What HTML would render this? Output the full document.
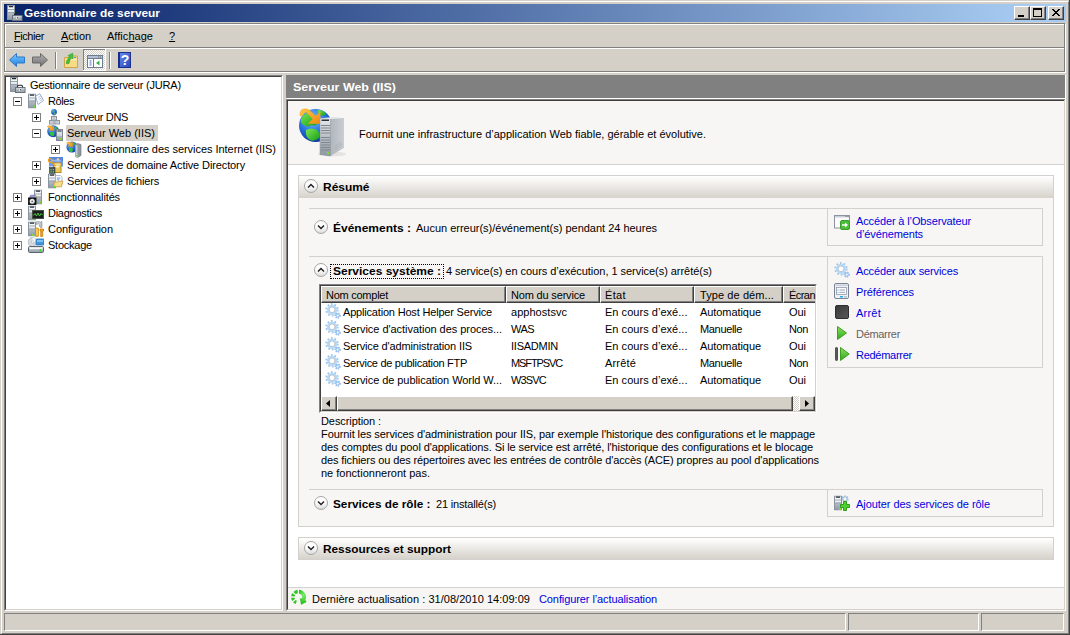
<!DOCTYPE html>
<html lang="fr"><head><meta charset="utf-8"><title>Gestionnaire de serveur</title>
<style>
html,body{margin:0;padding:0;}
body{width:1070px;height:635px;overflow:hidden;background:#D4D0C8;position:relative;font-family:"Liberation Sans",sans-serif;font-size:11px;color:#000;}
div,span,svg{position:absolute;box-sizing:border-box;}
.t{white-space:nowrap;line-height:16px;height:16px;font-size:11px;}
.b{font-weight:bold;transform-origin:0 50%;}
.w{color:#fff;}
.lk{color:#0000E0;}
.gr{color:#666260;}
.hl{position:absolute;height:1px;}
.vl{position:absolute;width:1px;}
u{text-decoration:underline;}
.cb{width:16px;height:14px;background:#D4D0C8;border-left:1px solid #fff;border-top:1px solid #fff;border-right:1px solid #404040;border-bottom:1px solid #404040;box-shadow:inset -1px -1px 0 #808080;}
.eb{width:9px;height:9px;border:1px solid #808080;background:#fff;}
.eb i{position:absolute;background:#000;}
.eb i.h{left:1px;top:3px;width:5px;height:1px;}
.eb i.v{left:3px;top:1px;width:1px;height:5px;}
.chev{width:14px;height:14px;border-radius:7px;border:1px solid #A6A6A6;background:linear-gradient(180deg,#fff 45%,#DCDCDC 100%);}
.chev svg{left:-1px;top:-1px;}
.hd{height:17px;background:#D4D0C8;border-top:1px solid #fff;border-left:1px solid #fff;border-right:1px solid #404040;border-bottom:1px solid #404040;box-shadow:inset -1px -1px 0 #808080;}
.sb{height:15px;background:#D4D0C8;border-top:1px solid #fff;border-left:1px solid #fff;border-right:1px solid #404040;border-bottom:1px solid #404040;box-shadow:inset -1px -1px 0 #808080;}
.sp{top:613px;height:18px;border-top:1px solid #808080;border-left:1px solid #808080;border-bottom:1px solid #fff;border-right:1px solid #fff;}

</style></head>
<body>
<!-- window frame -->
<div style="left:0;top:0;width:1070px;height:635px;border-right:1px solid #404040;border-bottom:1px solid #404040;"></div>
<div style="left:1px;top:1px;width:1068px;height:633px;border-left:1px solid #fff;border-top:1px solid #fff;border-right:1px solid #808080;border-bottom:1px solid #808080;"></div>

<!-- title bar -->
<div id="title" style="left:4px;top:4px;width:1062px;height:18px;background:linear-gradient(90deg,#0A246A 0%,#0A246A 2%,#A6CAF0 96%,#A6CAF0 100%);"></div>
<svg style="left:7px;top:5px" width="16" height="16" viewBox="0 0 16 16"> <use href="#tw" x="0" y="0"/>
 <path d="M7.500 10.500 v-1 q0 -1.200 1.200 -1.200 h2.600 q1.200 0 1.200 1.200 v1" fill="none" stroke="#23282E" stroke-width="1.100"/>
 <rect x="5.500" y="10.500" width="9.500" height="5" fill="#A3ABB4" stroke="#6A727B" stroke-width="1"/>
 <rect x="6" y="11" width="8.500" height="1.500" fill="#C9CFD6"/>
 <rect x="9.300" y="11.500" width="1.800" height="2.500" fill="#F4F4F4"/><rect x="10" y="12" width="0.800" height="1.500" fill="#333"/>
</svg>
<span class="t b w" style="left:24px;top:5px;transform:scaleX(1.0798);">Gestionnaire de serveur</span>
<!-- caption buttons -->
<div class="cb" style="left:1014px;top:6px;"></div>
<div class="cb" style="left:1030px;top:6px;"></div>
<div class="cb" style="left:1048px;top:6px;"></div>
<svg style="left:1014px;top:6px" width="50" height="14" viewBox="0 0 50 14" shape-rendering="crispEdges">
 <rect x="4" y="9" width="6" height="2" fill="#000"/>
 <rect x="19.500" y="3" width="8" height="7" fill="none" stroke="#000" stroke-width="1"/><rect x="19" y="2" width="9" height="2" fill="#000"/>
 <path d="M38 3 l7 7 M39 3 l7 7 M45 3 l-7 7 M46 3 l-7 7" stroke="#000" stroke-width="1" shape-rendering="auto"/>
</svg>

<!-- menu bar + toolbar etched frame -->
<div style="left:4px;top:23px;width:1061px;height:49px;border:1px solid #808080;"></div>
<div style="left:5px;top:24px;width:1061px;height:49px;border:1px solid #fff;border-left-color:#fff;"></div>
<div class="hl" style="left:5px;top:47px;width:1059px;background:#808080;"></div>
<div class="hl" style="left:5px;top:48px;width:1059px;background:#fff;"></div>
<div class="hl" style="left:4px;top:71px;width:1061px;background:#808080;"></div>
<div class="vl" style="left:1064px;top:23px;height:49px;background:#808080;"></div>
<div class="vl" style="left:4px;top:72px;height:1px;background:#fff;"></div>
<span class="t " style="left:14px;top:28px;letter-spacing:-0.433px;"><u>F</u>ichier</span>
<span class="t " style="left:61px;top:28px;letter-spacing:-0.099px;"><u>A</u>ction</span>
<span class="t " style="left:107px;top:28px;letter-spacing:0.035px;">Affic<u>h</u>age</span>
<span class="t " style="left:169px;top:28px;"><u>?</u></span>

<!-- toolbar icons -->
<svg style="left:8px;top:51px;overflow:visible" width="130" height="20" viewBox="0 0 130 20">
 <defs>
  <linearGradient id="gb" x1="0" y1="0" x2="0" y2="1"><stop offset="0" stop-color="#7DCBFF"/><stop offset="1" stop-color="#1E7FE0"/></linearGradient>
  <linearGradient id="gg" x1="0" y1="0" x2="0" y2="1"><stop offset="0" stop-color="#B5B5B5"/><stop offset="1" stop-color="#6E6E6E"/></linearGradient>
  <linearGradient id="gh" x1="0" y1="0" x2="1" y2="1"><stop offset="0" stop-color="#6C8FEA"/><stop offset="1" stop-color="#2645B8"/></linearGradient>
 </defs>
 <path d="M1.500 9 L8.500 2.500 V6 H16.500 V12 H8.500 V15.500 Z" fill="url(#gb)" stroke="#2B78C8" stroke-width="1"/>
 <path d="M39.500 9 L32.500 2.500 V6 H24.500 V12 H32.500 V15.500 Z" fill="url(#gg)" stroke="#6A6A6A" stroke-width="1"/>
 <rect x="47" y="1" width="1" height="17" fill="#808080"/><rect x="48" y="1" width="1" height="17" fill="#fff"/>
 <!-- folder up -->
 <path d="M56.500 6.500 h4.500 l1.500 -1.500 h7 v11.500 h-13 z" fill="#F6DC86" stroke="#CFA645" stroke-width="1"/>
 <rect x="57" y="8" width="12" height="1" fill="#FBEDB8"/>
 <rect x="66" y="6" width="2" height="1" fill="#5A8FD8"/>
 <path d="M58.300 12.500 q0.200 -4.500 3.200 -6.300 l-1.400 -1.600 l4.600 -2.400 l0.300 5.600 l-1.500 -0.800 q-2 1.300 -2.400 5.200 q-1.400 0.900 -2.800 0.300 z" fill="#43C23C" stroke="#2C9A2A" stroke-width="0.600"/>
 <!-- pressed button -->
 <defs><pattern id="dth" width="2" height="2" patternUnits="userSpaceOnUse"><rect width="2" height="2" fill="#D4D0C8"/><rect width="1" height="1" fill="#fff"/><rect x="1" y="1" width="1" height="1" fill="#fff"/></pattern></defs>
 <rect x="75" y="-2" width="23" height="22" fill="url(#dth)"/>
 <rect x="75" y="-2" width="23" height="1" fill="#808080"/><rect x="75" y="-2" width="1" height="22" fill="#808080"/>
 <rect x="75" y="19" width="23" height="1" fill="#fff"/><rect x="97" y="-2" width="1" height="22" fill="#fff"/>
 <rect x="79.500" y="4.500" width="15" height="12" fill="#fff" stroke="#6B7C93" stroke-width="1"/>
 <rect x="80" y="5" width="14" height="2" fill="#B4C0D0"/>
 <rect x="90" y="5.500" width="1" height="1" fill="#56657A"/><rect x="92" y="5.500" width="1" height="1" fill="#56657A"/>
 <rect x="80" y="7" width="14" height="1" fill="#6B7C93"/>
 <rect x="85" y="8" width="1" height="8" fill="#6B7C93"/>
 <rect x="81.500" y="9.500" width="2" height="1" fill="#3F6FD0"/><rect x="81.500" y="11.500" width="2" height="1" fill="#3F6FD0"/><rect x="81.500" y="13.500" width="2" height="1" fill="#3F6FD0"/>
 <path d="M91.500 9.500 v5 l-3.500 -2.500 z" fill="#37B24A"/>
 <rect x="101" y="1" width="1" height="17" fill="#808080"/><rect x="102" y="1" width="1" height="17" fill="#fff"/>
 <!-- help -->
 <rect x="110.500" y="1.500" width="12" height="15" fill="url(#gh)" stroke="#1B2F8C" stroke-width="1"/>
 <rect x="110" y="1" width="2" height="16" fill="#1A2C88"/>
 <text x="117" y="14" font-family="Liberation Sans, sans-serif" font-size="14" font-weight="bold" fill="#fff" text-anchor="middle">?</text>
</svg>

<!-- left tree panel -->
<div style="left:4px;top:75px;width:279px;height:536px;background:#fff;border-left:1px solid #808080;border-top:1px solid #808080;border-right:1px solid #fff;border-bottom:1px solid #fff;"></div>
<div style="left:5px;top:76px;width:277px;height:534px;border-left:1px solid #404040;border-top:1px solid #404040;border-right:1px solid #D4D0C8;border-bottom:1px solid #D4D0C8;"></div>

<!-- tree -->
<div style="left:66px;top:125px;width:92px;height:16px;background:#D4D0C8;"></div>
<span class="t " style="left:30px;top:77px;letter-spacing:-0.184px;">Gestionnaire de serveur (JURA)</span>
<span class="t " style="left:48px;top:93px;letter-spacing:-0.425px;">Rôles</span>
<span class="t " style="left:67px;top:109px;letter-spacing:-0.345px;">Serveur DNS</span>
<span class="t " style="left:67px;top:125px;letter-spacing:0.010px;">Serveur Web (IIS)</span>
<span class="t " style="left:87px;top:141px;letter-spacing:-0.044px;">Gestionnaire des services Internet (IIS)</span>
<span class="t " style="left:67px;top:157px;letter-spacing:-0.116px;">Services de domaine Active Directory</span>
<span class="t " style="left:67px;top:173px;letter-spacing:-0.169px;">Services de fichiers</span>
<span class="t " style="left:48px;top:189px;letter-spacing:-0.133px;">Fonctionnalités</span>
<span class="t " style="left:48px;top:205px;letter-spacing:-0.260px;">Diagnostics</span>
<span class="t " style="left:48px;top:221px;letter-spacing:-0.034px;">Configuration</span>
<span class="t " style="left:48px;top:237px;letter-spacing:-0.234px;">Stockage</span>
<!-- shared defs -->
<svg width="0" height="0" style="left:0;top:0">
 <defs>
  <linearGradient id="tg" x1="0" y1="0" x2="0" y2="1"><stop offset="0" stop-color="#DDE2E8"/><stop offset="1" stop-color="#8E99A5"/></linearGradient>
  <radialGradient id="gl" cx="0.35" cy="0.3" r="0.8"><stop offset="0" stop-color="#6FB4F5"/><stop offset="0.6" stop-color="#1F62D0"/><stop offset="1" stop-color="#103A9A"/></radialGradient>
  <linearGradient id="og" x1="0" y1="0" x2="1" y2="1"><stop offset="0" stop-color="#FFC94A"/><stop offset="1" stop-color="#F08A10"/></linearGradient>
  <linearGradient id="gn" x1="0" y1="0" x2="0" y2="1"><stop offset="0" stop-color="#8BE25E"/><stop offset="1" stop-color="#2FA81C"/></linearGradient>
  <symbol id="tw" viewBox="0 0 8 15" width="8" height="15">
   <rect x="0.500" y="0.500" width="7" height="14" fill="url(#tg)" stroke="#8A949F" stroke-width="1"/>
   <rect x="1" y="2.400" width="6" height="1.700" fill="#F3F5F7"/>
   <rect x="1" y="4.200" width="6" height="0.800" fill="#8F99A4"/>
   <rect x="1" y="5" width="6" height="2.100" fill="#E9ECEF"/>
   <rect x="1" y="7.100" width="6" height="0.800" fill="#8F99A4"/>
   <rect x="2" y="1" width="4" height="1.200" fill="#1E2832"/>
  </symbol>
  <symbol id="gear" viewBox="0 0 16 16" width="16" height="16">
   <circle cx="7" cy="6.800" r="5.400" fill="none" stroke="#A4C8EA" stroke-width="2.600" stroke-dasharray="1.700 1.693"/>
   <circle cx="7" cy="6.800" r="4.100" fill="#fff" stroke="#B7DAF8" stroke-width="2.100"/>
   <circle cx="7" cy="6.800" r="2.900" fill="#fff" stroke="#A3ADB8" stroke-width="0.700"/>
   <circle cx="12.700" cy="12.600" r="2.400" fill="none" stroke="#8DB6E6" stroke-width="1.500" stroke-dasharray="1.050 1.105"/>
   <circle cx="12.700" cy="12.600" r="1.700" fill="#EEF5FC" stroke="#9AC2EE" stroke-width="1.100"/>
  </symbol>
 </defs>
</svg>
<!-- root -->
<svg style="left:10px;top:77px" width="16" height="16" viewBox="0 0 16 16">
 <use href="#tw" x="0" y="0"/>
 <path d="M7.500 10.500 v-1 q0 -1.200 1.200 -1.200 h2.600 q1.200 0 1.200 1.200 v1" fill="none" stroke="#23282E" stroke-width="1.100"/>
 <rect x="5.500" y="10.500" width="9.500" height="5" fill="#A3ABB4" stroke="#6A727B" stroke-width="1"/>
 <rect x="6" y="11" width="8.500" height="1.500" fill="#C9CFD6"/>
 <rect x="9.300" y="11.500" width="1.800" height="2.500" fill="#F4F4F4"/><rect x="10" y="12" width="0.800" height="1.500" fill="#333"/>
</svg>
<!-- roles -->
<svg style="left:28px;top:93px" width="16" height="16" viewBox="0 0 16 16">
 <path d="M7.500 3 L12 0.800 L15.500 7.500 L10 11.500 Z" fill="#FDFEFF" stroke="#8FA6C4" stroke-width="0.900"/>
 <path d="M10 4.500 l3 -1.500 M10.800 6.300 l3 -1.600 M11.500 8 l2.600 -1.500" stroke="#9FB4D6" stroke-width="0.700"/>
 <use href="#tw" x="0" y="0.500"/>
 <rect x="5" y="12.500" width="2" height="2" fill="#55E020"/>
</svg>
<!-- DNS -->
<svg style="left:48px;top:109px" width="16" height="16" viewBox="0 0 16 16">
 <circle cx="6" cy="2.900" r="2.900" fill="url(#gl)"/>
 <path d="M4.300 1.500 q1 -1 2 -0.200 q-0.300 1.200 -1.500 1.600 z M6 3.500 q1.500 -0.300 1.800 0.800 q-0.800 1.200 -1.800 0.700 z" fill="#3FC23A"/>
 <path d="M6 6 v1.500" stroke="#8A9099" stroke-width="1"/>
 <rect x="3.500" y="7.500" width="5" height="3.500" fill="#E1E5EA" stroke="#8E949D" stroke-width="1"/>
 <rect x="1.500" y="11.500" width="4.500" height="3.500" fill="#E1E5EA" stroke="#8E949D" stroke-width="1"/>
 <rect x="7" y="11.500" width="4.500" height="3.500" fill="#E1E5EA" stroke="#8E949D" stroke-width="1"/>
 <rect x="4.500" y="8.500" width="3" height="1" fill="#A9B0BA"/><rect x="2.500" y="12.500" width="2.500" height="1" fill="#A9B0BA"/><rect x="8" y="12.500" width="2.500" height="1" fill="#A9B0BA"/>
</svg>
<!-- IIS server -->
<svg style="left:46px;top:124px" width="18" height="18" viewBox="0 0 18 18">
 <circle cx="7.200" cy="7.200" r="6" fill="url(#gl)"/>
 <path d="M4 8.500 q2 -1.500 4 0 q1 1.500 -0.500 3.500 q-2.500 0.500 -3.500 -1.500 z M8.500 3 q2 -0.500 3 1 q-1 1.500 -2.500 1 z" fill="#35C236"/>
 <path d="M1.200 2.500 q2.500 -2 5.200 0.300 l1.300 -1.300 l0.300 5.200 l-5.200 -0.400 l1.400 -1.400 q-1.500 -1.300 -3 -2.400 z" fill="url(#og)" stroke="#E28A12" stroke-width="0.400"/>
 <rect x="10.500" y="5.500" width="6" height="11" fill="url(#tg)" stroke="#7C8691" stroke-width="1"/>
 <rect x="11.500" y="6.500" width="4" height="1" fill="#27313C"/><rect x="11" y="8.500" width="5" height="1" fill="#F4F6F8"/><rect x="11" y="10.500" width="5" height="1" fill="#EEF1F4"/>
 <rect x="14" y="14" width="2" height="2" fill="#7BE020"/>
</svg>
<!-- IIS manager -->
<svg style="left:66px;top:140px" width="16" height="18" viewBox="0 0 16 18">
 <circle cx="6" cy="7" r="5.600" fill="url(#gl)"/>
 <path d="M3 8.500 q2 -1.500 3.500 0 q1 1.500 -0.500 3.500 q-2 0.500 -3 -1.500 z M7 3 q2 -0.500 2.500 1 q-1 1.500 -2 1 z" fill="#35C236"/>
 <path d="M0.500 2.800 q2.300 -1.800 4.800 0.200 l1.200 -1.200 l0.300 4.800 l-4.800 -0.400 l1.300 -1.300 q-1.400 -1.200 -2.800 -2.100 z" fill="url(#og)" stroke="#E28A12" stroke-width="0.400"/>
 <path d="M9.500 4.500 l2 -1 l3.500 1 v11 l-3.500 2 l-2 -1 z" fill="#8E979F" stroke="#666E76" stroke-width="0.600"/>
 <path d="M9.500 4.500 l2 0.800 v12.200 l-2 -1 z" fill="#C5CBD2"/>
 <rect x="10" y="15" width="1" height="1" fill="#5BE020"/>
</svg>
<!-- AD DS -->
<svg style="left:48px;top:157px" width="16" height="17" viewBox="0 0 16 17">
 <rect x="1" y="0" width="14" height="9.500" fill="#6C9BEA"/>
 <rect x="1" y="0" width="14" height="4" fill="#5587E0"/>
 <path d="M3 3.500 h10 M5 2 v3 M8 2 v3 M11 2 v3" stroke="#A9C6F5" stroke-width="0.700"/>
 <circle cx="10" cy="2.300" r="1.200" fill="#E9C9A0"/><path d="M8.300 6 q1.700 -3 3.400 0 z" fill="#D9B48A"/>
 <rect x="5.500" y="6" width="7.500" height="9.500" fill="#E9C75A" stroke="#B38A1C" stroke-width="1"/>
 <rect x="6" y="6.500" width="6.500" height="2" fill="#F6E29A"/>
 <rect x="7" y="9" width="4" height="1.500" fill="#FFF6D0"/>
 <path d="M3 4.800 L7.500 9" stroke="#E79A1A" stroke-width="1.300"/>
 <circle cx="2.200" cy="3.500" r="1.800" fill="none" stroke="#F2A422" stroke-width="1.300"/>
 <rect x="1.500" y="10.500" width="5.500" height="6" fill="#4A5058" stroke="#2F343A" stroke-width="0.600"/>
 <rect x="2.500" y="12" width="1.300" height="1.300" fill="#52E032"/><rect x="4.800" y="12" width="1.300" height="1.300" fill="#52E032"/>
 <rect x="2.500" y="14.300" width="1.300" height="1.300" fill="#52E032"/><rect x="4.800" y="14.300" width="1.300" height="1.300" fill="#52E032"/>
</svg>
<!-- File services -->
<svg style="left:48px;top:173px" width="16" height="16" viewBox="0 0 16 16">
 <use href="#tw" x="0" y="0.500"/>
 <path d="M7.500 2.500 h5 l1.500 1.500 v6.500 h-6.500 z" fill="#FDFEFF" stroke="#A3ADBA" stroke-width="0.800"/>
 <path d="M8.800 5 h3.500 M8.800 6.800 h2.500" stroke="#4C86D8" stroke-width="0.900"/>
 <path d="M5.500 13.800 l1 -4.800 h3 l0.800 -0.800 h4.500 l-1.300 5.600 z" fill="#F3DB90" stroke="#C39A38" stroke-width="0.800"/>
 <rect x="5" y="13" width="2" height="2" fill="#55E020"/>
</svg>
<!-- Features -->
<svg style="left:28px;top:189px" width="16" height="16" viewBox="0 0 16 16">
 <use href="#tw" x="6" y="0.500"/>
 <rect x="11" y="12.500" width="2" height="2" fill="#7BE020"/>
 <path d="M1.500 9 l1 -2.800 h5 l0.800 2.800 z" fill="#9A9AD0" stroke="#6C6CA8" stroke-width="0.600"/>
 <rect x="7" y="7" width="1.500" height="2" fill="#F2A81D"/>
 <rect x="0.500" y="9" width="7.500" height="6.500" fill="#1D1F22" stroke="#000" stroke-width="0.800"/>
 <circle cx="4.200" cy="12.300" r="2.500" fill="#E8EAEC"/><circle cx="4.200" cy="12.300" r="0.900" fill="#6A6F75"/>
</svg>
<!-- Diagnostics -->
<svg style="left:28px;top:205px" width="16" height="16" viewBox="0 0 16 16">
 <use href="#tw" x="0" y="0.500"/>
 <rect x="4" y="13" width="2" height="1.500" fill="#55E020"/>
 <rect x="4.500" y="5.500" width="11" height="8" fill="#1A1E1A" stroke="#4A4F4A" stroke-width="1"/>
 <path d="M5.500 10.500 l1.500 -2 l1.500 2.500 l1.500 -3 l1.500 3 l1.500 -2.500 l1.500 1.500" fill="none" stroke="#46C83C" stroke-width="1"/>
</svg>
<!-- Configuration -->
<svg style="left:28px;top:221px" width="16" height="16" viewBox="0 0 16 16">
 <use href="#tw" x="0" y="0.500"/>
 <rect x="4" y="13" width="2" height="2" fill="#7BE020"/>
 <path d="M8 1 q3 -1.500 5.500 1 q1 2.500 -1 4.500 l-1.500 -1.500 q1 -1.500 0 -2.500 l-2.500 1 z" fill="#D5D9DE" stroke="#8A9099" stroke-width="0.700"/>
 <path d="M13 0.500 l1 0 v6 l-1 0 z" fill="#B8BDC4" stroke="#8A9099" stroke-width="0.500"/>
 <rect x="7.500" y="7" width="3" height="8.500" rx="0.800" fill="#F6B21D" stroke="#D08A0A" stroke-width="0.700"/>
 <rect x="8.500" y="8" width="1" height="6" fill="#FFE08A"/>
 <path d="M12 8 h3.500 v2 h-0.800 v5.500 h-2 v-5.500 h-0.700 z" fill="#F39A14" stroke="#C97A08" stroke-width="0.700"/>
</svg>
<!-- Storage -->
<svg style="left:28px;top:237px" width="16" height="16" viewBox="0 0 16 16">
 <circle cx="4.500" cy="5" r="4.400" fill="#D9DCE0" stroke="#9EA4AB" stroke-width="0.700"/>
 <circle cx="4.500" cy="5" r="1.400" fill="#F8F8F8" stroke="#9EA4AB" stroke-width="0.600"/>
 <path d="M4.500 0.600 A4.400 4.400 0 0 1 8.900 5 L5.900 5 A1.400 1.400 0 0 0 4.500 3.600 Z" fill="#F4F6F8"/>
 <rect x="8" y="2" width="8" height="6" rx="0.800" fill="#3F97E0" stroke="#2A6FB8" stroke-width="0.800"/>
 <rect x="9" y="3" width="6" height="2" fill="#7FC0F2"/>
 <rect x="0.500" y="9.500" width="15" height="6" rx="1.200" fill="url(#tg)" stroke="#5F666E" stroke-width="1"/>
 <rect x="1.500" y="10.500" width="13" height="1.500" fill="#F6F8FA"/>
 <rect x="11.500" y="12" width="1.500" height="2.500" fill="#3EDC28"/>
</svg>

<!-- expand boxes -->
<div class="eb" style="left:13px;top:97px;"><i class="h"></i></div>
<div class="eb" style="left:32px;top:113px;"><i class="h"></i><i class="v"></i></div>
<div class="eb" style="left:32px;top:129px;"><i class="h"></i></div>
<div class="eb" style="left:51px;top:145px;"><i class="h"></i><i class="v"></i></div>
<div class="eb" style="left:32px;top:161px;"><i class="h"></i><i class="v"></i></div>
<div class="eb" style="left:32px;top:177px;"><i class="h"></i><i class="v"></i></div>
<div class="eb" style="left:13px;top:193px;"><i class="h"></i><i class="v"></i></div>
<div class="eb" style="left:13px;top:209px;"><i class="h"></i><i class="v"></i></div>
<div class="eb" style="left:13px;top:225px;"><i class="h"></i><i class="v"></i></div>
<div class="eb" style="left:13px;top:241px;"><i class="h"></i><i class="v"></i></div>

<!-- right panel -->
<div style="left:286px;top:75px;width:780px;height:536px;border-left:1px solid #808080;border-right:1px solid #fff;border-bottom:1px solid #fff;"></div>
<div style="left:287px;top:75px;width:778px;height:535px;border-left:1px solid #404040;border-right:1px solid #D4D0C8;border-bottom:1px solid #D4D0C8;"></div>
<div style="left:286px;top:75px;width:779px;height:23px;background:#808080;"></div>
<div class="hl" style="left:286px;top:98px;width:779px;background:#fff;"></div>
<div class="hl" style="left:286px;top:99px;width:779px;background:#808080;"></div>
<div class="hl" style="left:287px;top:100px;width:777px;background:#404040;"></div>
<span class="t b w" style="left:293px;top:79px;transform:scaleX(1.1332);">Serveur Web (IIS)</span>
<div id="content" style="left:288px;top:101px;width:776px;height:508px;background:#fff;"></div>
<div style="left:288px;top:101px;width:776px;height:63px;background:#F7F6F4;"></div>
<div class="hl" style="left:288px;top:164px;width:776px;background:#D0D0D0;"></div>
<span class="t " style="left:359px;top:126px;letter-spacing:0.007px;">Fournit une infrastructure d’application Web fiable, gérable et évolutive.</span>

<!-- Resume section -->
<div style="left:298px;top:175px;width:756px;height:352px;background:#F7F6F4;border:1px solid #D2D1CE;"></div>
<div style="left:299px;top:176px;width:754px;height:22px;background:linear-gradient(180deg,#FFFFFF 0%,#F4F3F0 28%,#E4E2DD 64%,#D6D2CB 100%);"></div>
<div class="chev" style="left:304px;top:179px;"><svg width="14" height="14" viewBox="0 0 14 14"><path d="M4 8.500 L7 5.500 L10 8.500" fill="none" stroke="#222" stroke-width="1.500"/></svg></div>
<span class="t b" style="left:323.3px;top:179px;transform:scaleX(1.0865);">Résumé</span>

<div class="hl" style="left:309px;top:208px;width:734px;background:#D2D1CE;"></div>
<div class="chev" style="left:314px;top:220px;"><svg width="14" height="14" viewBox="0 0 14 14"><path d="M4 5.500 L7 8.500 L10 5.500" fill="none" stroke="#222" stroke-width="1.500"/></svg></div>
<span class="t b" style="left:332.5px;top:220px;transform:scaleX(1.0904);">Événements :</span>
<span class="t " style="left:416px;top:220px;letter-spacing:-0.012px;">Aucun erreur(s)/événement(s) pendant 24 heures</span>
<div style="left:827px;top:208px;width:216px;height:38px;border:1px solid #D2D0CC;border-top:none;"></div>
<span class="t lk" style="left:856px;top:213px;letter-spacing:-0.130px;">Accéder à l’Observateur</span>
<span class="t lk" style="left:856px;top:226px;letter-spacing:-0.125px;">d’événements</span>

<div class="hl" style="left:309px;top:256px;width:734px;background:#D2D1CE;"></div>
<div class="chev" style="left:314px;top:263px;"><svg width="14" height="14" viewBox="0 0 14 14"><path d="M4 8.500 L7 5.500 L10 8.500" fill="none" stroke="#222" stroke-width="1.500"/></svg></div>
<div style="left:330px;top:264px;width:114px;height:15px;border:1px dotted #000;"></div>
<span class="t b" style="left:332.5px;top:263px;transform:scaleX(1.0900);">Services système :</span>
<span class="t " style="left:446px;top:263px;letter-spacing:-0.042px;">4 service(s) en cours d’exécution, 1 service(s) arrêté(s)</span>
<div style="left:827px;top:256px;width:216px;height:112px;border:1px solid #D2D1CE;border-top:none;"></div>
<span class="t lk" style="left:856px;top:263px;letter-spacing:-0.127px;">Accéder aux services</span>
<span class="t lk" style="left:856px;top:284px;letter-spacing:-0.119px;">Préférences</span>
<span class="t lk" style="left:856px;top:305px;letter-spacing:0.231px;">Arrêt</span>
<span class="t gr" style="left:856px;top:326px;letter-spacing:-0.307px;">Démarrer</span>
<span class="t lk" style="left:856px;top:347px;letter-spacing:-0.269px;">Redémarrer</span>

<!-- list view -->
<div style="left:319px;top:284px;width:498px;height:129px;background:#fff;border-left:1px solid #808080;border-top:1px solid #808080;border-right:1px solid #fff;border-bottom:1px solid #fff;"></div>
<div style="left:320px;top:285px;width:496px;height:127px;border-left:1px solid #404040;border-top:1px solid #404040;border-right:1px solid #D4D0C8;border-bottom:1px solid #D4D0C8;"></div>
<div class="hd" style="left:321px;top:286px;width:185px;"></div>
<div class="hd" style="left:506px;top:286px;width:94px;"></div>
<div class="hd" style="left:600px;top:286px;width:94px;"></div>
<div class="hd" style="left:694px;top:286px;width:89px;"></div>
<div class="hd" style="left:783px;top:286px;width:32px;border-right:none;box-shadow:inset 0 -1px 0 #808080;"></div>
<span class="t " style="left:326px;top:287px;letter-spacing:-0.254px;">Nom complet</span>
<span class="t " style="left:511px;top:287px;letter-spacing:-0.173px;">Nom du service</span>
<span class="t " style="left:605px;top:287px;letter-spacing:0.355px;">État</span>
<span class="t " style="left:700px;top:287px;letter-spacing:0.088px;">Type de dém...</span>
<span class="t " style="left:789px;top:287px;letter-spacing:-0.550px;">Écran</span>

<span class="t " style="left:343px;top:304px;letter-spacing:-0.183px;">Application Host Helper Service</span>
<span class="t " style="left:343px;top:321px;letter-spacing:-0.043px;">Service d'activation des proces...</span>
<span class="t " style="left:343px;top:338px;letter-spacing:-0.141px;">Service d'administration IIS</span>
<span class="t " style="left:343px;top:355px;letter-spacing:-0.287px;">Service de publication FTP</span>
<span class="t " style="left:343px;top:372px;letter-spacing:-0.067px;">Service de publication World W...</span>
<span class="t " style="left:511px;top:304px;letter-spacing:0.034px;">apphostsvc</span>
<span class="t " style="left:511px;top:321px;letter-spacing:-0.552px;">WAS</span>
<span class="t " style="left:511px;top:338px;letter-spacing:-0.238px;">IISADMIN</span>
<span class="t " style="left:511px;top:355px;letter-spacing:-1.113px;">MSFTPSVC</span>
<span class="t " style="left:511px;top:372px;letter-spacing:-0.825px;">W3SVC</span>
<span class="t " style="left:605px;top:304px;letter-spacing:0.033px;">En cours d’exé...</span>
<span class="t " style="left:605px;top:321px;letter-spacing:0.033px;">En cours d’exé...</span>
<span class="t " style="left:605px;top:338px;letter-spacing:0.033px;">En cours d’exé...</span>
<span class="t " style="left:605px;top:355px;letter-spacing:0.172px;">Arrêté</span>
<span class="t " style="left:605px;top:372px;letter-spacing:0.033px;">En cours d’exé...</span>
<span class="t " style="left:700px;top:304px;letter-spacing:-0.070px;">Automatique</span>
<span class="t " style="left:700px;top:321px;letter-spacing:-0.330px;">Manuelle</span>
<span class="t " style="left:700px;top:338px;letter-spacing:-0.070px;">Automatique</span>
<span class="t " style="left:700px;top:355px;letter-spacing:-0.330px;">Manuelle</span>
<span class="t " style="left:700px;top:372px;letter-spacing:-0.070px;">Automatique</span>
<span class="t " style="left:789px;top:304px;letter-spacing:-0.042px;">Oui</span>
<span class="t " style="left:789px;top:321px;letter-spacing:-0.396px;">Non</span>
<span class="t " style="left:789px;top:338px;letter-spacing:-0.042px;">Oui</span>
<span class="t " style="left:789px;top:355px;letter-spacing:-0.396px;">Non</span>
<span class="t " style="left:789px;top:372px;letter-spacing:-0.042px;">Oui</span>

<!-- scrollbar -->
<svg style="left:321px;top:396px" width="494" height="15"><defs><pattern id="dth2" width="2" height="2" patternUnits="userSpaceOnUse"><rect width="2" height="2" fill="#D4D0C8"/><rect width="1" height="1" fill="#fff"/><rect x="1" y="1" width="1" height="1" fill="#fff"/></pattern></defs><rect width="494" height="15" fill="url(#dth2)"/></svg>
<div class="sb" style="left:321px;top:396px;width:16px;"></div>
<div class="sb" style="left:337px;top:396px;width:456px;"></div>
<div class="sb" style="left:799px;top:396px;width:16px;"></div>
<svg style="left:321px;top:396px" width="494" height="15" viewBox="0 0 494 15"><path d="M9 4 v7 l-4 -3.500 z" fill="#000"/><path d="M484 4 v7 l4 -3.500 z" fill="#000"/></svg>

<span class="t " style="left:321px;top:413px;letter-spacing:-0.088px;">Description :</span>
<span class="t " style="left:321px;top:426px;letter-spacing:-0.087px;">Fournit les services d'administration pour IIS, par exemple l'historique des configurations et le mappage</span>
<span class="t " style="left:321px;top:439px;letter-spacing:-0.093px;">des comptes du pool d'applications. Si le service est arrêté, l'historique des configurations et le blocage</span>
<span class="t " style="left:321px;top:452px;letter-spacing:-0.113px;">des fichiers ou des répertoires avec les entrées de contrôle d'accès (ACE) propres au pool d'applications</span>
<span class="t " style="left:321px;top:465px;letter-spacing:0.006px;">ne fonctionneront pas.</span>

<div class="hl" style="left:309px;top:489px;width:734px;background:#D2D1CE;"></div>
<div class="chev" style="left:314px;top:496px;"><svg width="14" height="14" viewBox="0 0 14 14"><path d="M4 5.500 L7 8.500 L10 5.500" fill="none" stroke="#222" stroke-width="1.500"/></svg></div>
<span class="t b" style="left:333px;top:496px;transform:scaleX(1.0701);">Services de rôle :</span>
<span class="t " style="left:436px;top:496px;letter-spacing:-0.169px;">21 installé(s)</span>
<div style="left:827px;top:489px;width:216px;height:28px;border:1px solid #D2D0CC;border-top:none;"></div>
<span class="t lk" style="left:856px;top:496px;letter-spacing:-0.062px;">Ajouter des services de rôle</span>

<!-- Ressources section -->
<div style="left:298px;top:537px;width:756px;height:23px;border:1px solid #D2D1CE;background:linear-gradient(180deg,#FFFFFF 0%,#F4F3F0 28%,#E4E2DD 64%,#D6D2CB 100%);"></div>
<div class="chev" style="left:304px;top:541px;"><svg width="14" height="14" viewBox="0 0 14 14"><path d="M4 5.500 L7 8.500 L10 5.500" fill="none" stroke="#222" stroke-width="1.500"/></svg></div>
<span class="t b" style="left:323.3px;top:541px;transform:scaleX(1.0738);">Ressources et support</span>

<!-- footer -->
<div class="hl" style="left:288px;top:587px;width:776px;background:#D2D2D2;"></div>
<div style="left:288px;top:588px;width:776px;height:21px;background:#F7F6F4;"></div>
<span class="t " style="left:312px;top:591px;letter-spacing:0.034px;">Dernière actualisation : 31/08/2010 14:09:09</span>
<span class="t lk" style="left:539px;top:591px;letter-spacing:-0.094px;">Configurer l’actualisation</span>

<!-- status bar -->
<div class="sp" style="left:4px;width:842px;"></div>
<div class="sp" style="left:848px;width:131px;"></div>
<div class="sp" style="left:981px;width:83px;"></div>
<!-- big IIS icon -->
<svg style="left:298px;top:106px" width="50" height="52" viewBox="0 0 50 52">
 <defs>
  <radialGradient id="bgl" cx="0.4" cy="0.3" r="0.75"><stop offset="0" stop-color="#7FC4FF"/><stop offset="0.55" stop-color="#2670DD"/><stop offset="1" stop-color="#0D2F92"/></radialGradient>
  <linearGradient id="fr" x1="0" y1="0" x2="0" y2="1"><stop offset="0" stop-color="#E6E9EC"/><stop offset="1" stop-color="#8F979F"/></linearGradient>
  <linearGradient id="sd" x1="0" y1="0" x2="1" y2="0"><stop offset="0" stop-color="#9CA3AA"/><stop offset="1" stop-color="#C9CED3"/></linearGradient>
  <linearGradient id="lg" x1="0" y1="0" x2="1" y2="1"><stop offset="0" stop-color="#7BE84E"/><stop offset="1" stop-color="#169C1C"/></linearGradient>
 </defs>
 <ellipse cx="34" cy="48" rx="14" ry="2.500" fill="#E4E3E0"/>
 <circle cx="17.500" cy="19.500" r="16.500" fill="url(#bgl)"/>
 <path d="M3 13 q3 -6 9 -7 q4 2 3 6 q4 1 5 5 q-3 4 -7 2 q-3 3 -7 0 q-4 -2 -3 -6 z" fill="url(#lg)"/>
 <path d="M8 24 q6 -3 11 0 q4 3 2 8 q-5 4 -9 2 q-5 -3 -4 -10 z" fill="url(#lg)"/>
 <path d="M20 4 q5 0 8 4 q-3 3 -6 1 q-3 -2 -2 -5 z" fill="url(#lg)"/>
 <path d="M17.700 10.200 L12 4.500 Q8 1.500 4 3.500 Q1.500 5.500 2 9.800 L5.500 9.300 Q5 6.800 7 6.200 Q8.500 6 9.500 7.200 L14.800 13.100 L10.400 17.500 L22.100 17.500 L22.100 5.800 Z" fill="url(#og)" stroke="#F0A21A" stroke-width="0.500"/>
 <path d="M22 12.200 L32.500 11.500 L46 12 L46 42 L32.500 50 L22 48.500 Z" fill="url(#sd)"/>
 <path d="M22 12.200 L32.500 13 L32.500 50 L22 48.500 Z" fill="url(#fr)" stroke="#8A9299" stroke-width="0.500"/>
 <path d="M22 12.200 L32.500 11.500 L46 12 L32.500 13 Z" fill="#EEF0F2"/>
 <rect x="23.500" y="13.500" width="7.500" height="1.500" fill="#2B3138"/>
 <g stroke="#7F878F" stroke-width="1"><path d="M23 19.500 h9"/><path d="M23 22 h9"/><path d="M23 24.500 h9"/><path d="M23 27 h9"/><path d="M23 31.500 h9"/><path d="M23 34 h9"/><path d="M23 36.500 h9"/><path d="M23 39 h9"/><path d="M23 41.500 h9"/><path d="M23 44 h9"/></g>
 <rect x="29" y="46" width="2" height="2" fill="#6CE032"/>
 <g stroke="#A9AFB6" stroke-width="0.700"><path d="M37 40 l7 -4"/><path d="M37 42 l7 -4"/><path d="M37 44 l7 -4"/></g>
</svg>

<!-- event viewer link icon -->
<svg style="left:834px;top:215px" width="16" height="16" viewBox="0 0 16 16">
 <rect x="0.500" y="0.500" width="15" height="12.500" fill="#FDFDFE" stroke="#8D93A0" stroke-width="1"/>
 <rect x="1" y="1" width="14" height="1.500" fill="#C9CDD6"/>
 <rect x="11.500" y="1" width="1" height="1" fill="#6D7380"/><rect x="13.500" y="1" width="1" height="1" fill="#6D7380"/>
 <rect x="6.500" y="5.500" width="9" height="9" rx="1.500" fill="#4DBD3C" stroke="#3A9E2C" stroke-width="1"/>
 <path d="M8 9.300 h3 v-1.800 l3 2.500 l-3 2.500 v-1.800 h-3 z" fill="#fff"/>
</svg>
<!-- services gear -->
<svg style="left:834px;top:262px" width="16" height="16" viewBox="0 0 16 16"><use href="#gear"/></svg>
<!-- preferences -->
<svg style="left:834px;top:283px" width="16" height="16" viewBox="0 0 16 16">
 <rect x="0.500" y="0.500" width="14" height="15" rx="1.500" fill="#EEF1F5" stroke="#7B8494" stroke-width="1"/>
 <rect x="1.500" y="1.500" width="12" height="1.500" fill="#CAD1DB"/>
 <rect x="2.500" y="4.500" width="10" height="7" fill="#fff" stroke="#8F99AB" stroke-width="0.800"/>
 <path d="M5.500 7 h5.500 M5.500 9.300 h5.500" stroke="#8F99AB" stroke-width="0.900"/>
 <rect x="3.500" y="6.500" width="1" height="1" fill="#28A8E0"/><rect x="3.500" y="8.800" width="1" height="1" fill="#28A8E0"/>
 <rect x="6" y="13" width="3" height="1.500" fill="#28A8E0"/><rect x="10" y="13" width="3" height="1.500" fill="#B9C0CC"/>
</svg>
<!-- stop -->
<svg style="left:835px;top:305px" width="14" height="14" viewBox="0 0 14 14">
 <defs><linearGradient id="stp" x1="0" y1="0" x2="1" y2="1"><stop offset="0" stop-color="#3A3A3A"/><stop offset="1" stop-color="#585858"/></linearGradient></defs>
 <rect x="0.500" y="0.500" width="13" height="13" rx="1.500" fill="url(#stp)" stroke="#2E2E2E" stroke-width="1"/>
</svg>
<!-- start -->
<svg style="left:836px;top:325px" width="14" height="16" viewBox="0 0 14 16">
 <path d="M1.500 1.500 L10.500 8 L1.500 14.500 Z" fill="url(#gn)" stroke="#3F9E22" stroke-width="1" stroke-linejoin="round"/>
</svg>
<!-- restart -->
<svg style="left:835px;top:346px" width="16" height="16" viewBox="0 0 16 16">
 <rect x="0.500" y="1.500" width="2" height="13" rx="0.800" fill="#5A5A5A" stroke="#3A3A3A" stroke-width="0.800"/>
 <path d="M5.500 1.500 L14.200 8 L5.500 14.500 Z" fill="url(#gn)" stroke="#3F9E22" stroke-width="1" stroke-linejoin="round"/>
</svg>
<!-- list row gears -->
<svg style="left:325px;top:303px" width="16" height="16" viewBox="0 0 16 16"><use href="#gear"/></svg>
<svg style="left:325px;top:320px" width="16" height="16" viewBox="0 0 16 16"><use href="#gear"/></svg>
<svg style="left:325px;top:337px" width="16" height="16" viewBox="0 0 16 16"><use href="#gear"/></svg>
<svg style="left:325px;top:354px" width="16" height="16" viewBox="0 0 16 16"><use href="#gear"/></svg>
<svg style="left:325px;top:371px" width="16" height="16" viewBox="0 0 16 16"><use href="#gear"/></svg>
<!-- add role services -->
<svg style="left:834px;top:495px" width="17" height="17" viewBox="0 0 17 17">
 <circle cx="11" cy="4" r="2.800" fill="none" stroke="#A9C6DE" stroke-width="2" stroke-dasharray="1.200 1.250"/>
 <circle cx="11" cy="4" r="2.200" fill="#F3F7FA" stroke="#9DBBD6" stroke-width="1.100"/>
 <use href="#tw" x="0" y="0.500"/>
 <rect x="5" y="13" width="2" height="2" fill="#7BE020"/>
 <path d="M9.500 6.500 h3 v3 h3 v3 h-3 v3 h-3 v-3 h-3 v-3 h3 z" fill="#4FD031" stroke="#2E9E18" stroke-width="1" stroke-linejoin="round"/>
</svg>
<!-- refresh -->
<svg style="left:291px;top:589px" width="16" height="17" viewBox="0 0 16 17">
 <defs><radialGradient id="rfg" cx="0.6" cy="0.35" r="0.7"><stop offset="0" stop-color="#7CF06A"/><stop offset="1" stop-color="#1FB414"/></radialGradient></defs>
 <path d="M8.02 0.82 A7.4 7.4 0 0 1 14.36 10.97 L15.60 13.00 L10.10 15.70 L8.80 9.40 L11.07 9.16 A3.7 3.7 0 0 0 7.89 4.52 Z" fill="url(#rfg)"/>
 <path d="M4.73 15.06 A7.4 7.4 0 0 1 2.00 13.15 L4.74 10.96 A3.9 3.9 0 0 0 5.85 11.73 Z M1.09 11.90 A7.4 7.4 0 0 1 0.12 8.72 L3.63 8.68 A3.9 3.9 0 0 0 4.03 9.97 Z M0.16 7.30 A7.4 7.4 0 0 1 1.37 4.06 L4.16 6.19 A3.9 3.9 0 0 0 3.66 7.52 Z M2.36 2.88 A7.4 7.4 0 0 1 6.60 0.86 L6.82 4.36 A3.9 3.9 0 0 0 4.94 5.26 Z" fill="#33C426"/>
</svg>


</body></html>
